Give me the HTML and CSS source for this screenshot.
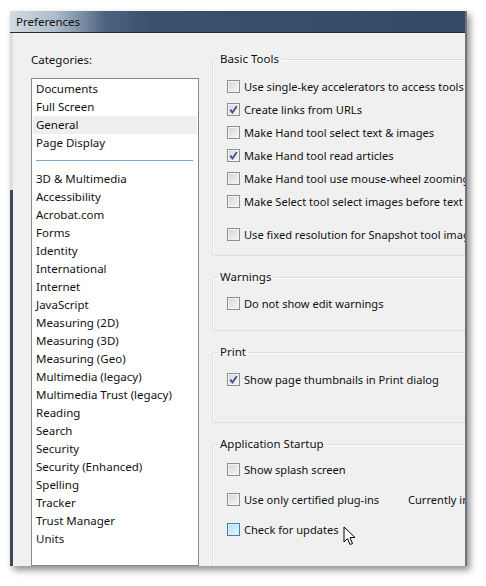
FILE: index.html
```html
<!DOCTYPE html>
<html lang="en">
<head>
    <meta charset="UTF-8">
    <title>Preferences</title>
    <link rel="stylesheet" href="styles.css">
</head>
<body>

<div class="window">
    <div class="titlebar">Preferences</div>

    <div class="dialog">
        <!-- Left: category list -->
        <div class="categories">
            <div class="cat-label">Categories:</div>
            <ul class="cat-list">
                <li>Documents</li>
                <li>Full Screen</li>
                <li class="selected">General</li>
                <li>Page Display</li>
                <li class="sep"></li>
                <li>3D &amp; Multimedia</li>
                <li>Accessibility</li>
                <li>Acrobat.com</li>
                <li>Forms</li>
                <li>Identity</li>
                <li>International</li>
                <li>Internet</li>
                <li>JavaScript</li>
                <li>Measuring (2D)</li>
                <li>Measuring (3D)</li>
                <li>Measuring (Geo)</li>
                <li>Multimedia (legacy)</li>
                <li>Multimedia Trust (legacy)</li>
                <li>Reading</li>
                <li>Search</li>
                <li>Security</li>
                <li>Security (Enhanced)</li>
                <li>Spelling</li>
                <li>Tracker</li>
                <li>Trust Manager</li>
                <li>Units</li>
            </ul>
        </div>

        <!-- Right: settings groups -->
        <div class="settings">
            <fieldset class="group basic">
                <legend>Basic Tools</legend>
                <div class="opt"><span class="box"></span>Use single-key accelerators to access tools</div>
                <div class="opt"><span class="box checked"><svg viewBox="0 0 13 13"><path d="M3.2 6.6 L5.4 9.4 L9.8 3.2"/></svg></span>Create links from URLs</div>
                <div class="opt"><span class="box"></span>Make Hand tool select text &amp; images</div>
                <div class="opt"><span class="box checked"><svg viewBox="0 0 13 13"><path d="M3.2 6.6 L5.4 9.4 L9.8 3.2"/></svg></span>Make Hand tool read articles</div>
                <div class="opt"><span class="box"></span>Make Hand tool use mouse-wheel zooming</div>
                <div class="opt"><span class="box"></span>Make Select tool select images before text</div>
                <div class="opt spaced"><span class="box"></span>Use fixed resolution for Snapshot tool images</div>
            </fieldset>

            <fieldset class="group warnings">
                <legend>Warnings</legend>
                <div class="opt"><span class="box"></span>Do not show edit warnings</div>
            </fieldset>

            <fieldset class="group print">
                <legend>Print</legend>
                <div class="opt"><span class="box checked"><svg viewBox="0 0 13 13"><path d="M3.2 6.6 L5.4 9.4 L9.8 3.2"/></svg></span>Show page thumbnails in Print dialog</div>
            </fieldset>

            <fieldset class="group startup">
                <legend>Application Startup</legend>
                <div class="opt tall"><span class="box"></span>Show splash screen</div>
                <div class="opt tall"><span class="box"></span><span class="opt-text">Use only certified plug-ins</span>Currently installed</div>
                <div class="opt tall"><span class="box hover"></span>Check for updates
                    <svg class="cursor" width="14" height="21" viewBox="0 0 14 21">
                        <path d="M1 1 L1 16 L4.5 12.5 L7 18.5 L9.5 17.5 L7 11.5 L12 11.5 Z"/>
                    </svg>
                </div>
            </fieldset>
        </div>
    </div>
</div>

</body>
</html>
```

FILE: styles.css
```css
* {
    margin: 0;
    padding: 0;
    box-sizing: border-box;
    font-family: 'Noto Sans', 'Open Sans', sans-serif;
}

body {
    background: #ffffff;
    width: 486px;
    height: 586px;
    overflow: hidden;
}

/* Window frame */
.window {
    margin: 11px 0 0 10px;
    width: 457px;
    height: 555px;
    display: flex;
    flex-direction: column;
    overflow: hidden;
    border-right: 2px solid #6f7377;
    box-shadow: 3px 4px 7px rgba(0, 0, 0, 0.45);
}

.titlebar {
    height: 22px;
    flex: none;
    padding-left: 6px;
    font-size: 11.5px;
    line-height: 21px;
    color: #111;
    background: linear-gradient(to right, #d3dbe3 0, #aebccb 45px, #4d6480 95px, #3a506b 140px, #344a64 100%);
    border-bottom: 1px solid #1f2b3a;
}

.dialog {
    flex: 1;
    display: flex;
    min-height: 0;
    background:
        linear-gradient(to bottom, #d9dee3 157px, #3d4958 157px) left top / 3px 100% no-repeat,
        #f0f0f0;
}

/* Categories */
.categories {
    flex: none;
    width: 202px;
    padding: 19px 0 0 21px;
    display: flex;
    flex-direction: column;
}

.cat-label {
    font-size: 11.5px;
    line-height: 16px;
    color: #111;
    margin-bottom: 10px;
}

.cat-list {
    list-style: none;
    flex: 1;
    width: 168px;
    background: #ffffff;
    border: 1px solid #828790;
    padding: 1px 1px 0;
}

.cat-list li {
    font-size: 11.5px;
    line-height: 18px;
    height: 18px;
    padding-left: 3px;
    color: #111;
    white-space: nowrap;
}

.cat-list li.selected {
    background: #efefef;
}

.cat-list li.sep {
    padding: 8px 4px 0 3px;
}

.cat-list li.sep::after {
    content: "";
    display: block;
    border-top: 1px solid #7ba6c9;
}

/* Settings groups */
.settings {
    flex: none;
    width: 300px;
    padding-top: 18px;
}

.group {
    width: 290px;
    border: 1px solid #d5dfe5;
    border-radius: 3px;
    box-shadow: inset 1px 1px 0 #ffffff;
    padding-left: 14px;
    margin-bottom: 13px;
}

.group legend {
    font-size: 11.5px;
    line-height: 16px;
    color: #111;
    margin-left: -9px;
    padding: 0 2px;
}

.basic { padding-top: 8px; padding-bottom: 9px; }
.warnings { padding-top: 7px; padding-bottom: 15px; }
.print { padding-top: 8px; padding-bottom: 31px; }
.startup { padding-top: 2px; padding-bottom: 40px; }

.opt {
    display: flex;
    align-items: center;
    height: 23px;
    font-size: 11.1px;
    color: #111;
    white-space: nowrap;
    position: relative;
}

.opt.spaced {
    margin-top: 10px;
}

.opt.tall {
    height: 30px;
}

.opt-text {
    width: 164px;
}

/* Checkbox */
.box {
    flex: none;
    width: 13px;
    height: 13px;
    margin-right: 4px;
    border: 1px solid #8f8f8f;
    background: linear-gradient(135deg, #d6d6d6, #f6f6f6);
    box-shadow: inset 0 0 0 1px #f4f4f4;
    position: relative;
}

.box svg {
    position: absolute;
    left: -1px;
    top: -1px;
    width: 13px;
    height: 13px;
}

.box svg path {
    fill: none;
    stroke: #3c4f8a;
    stroke-width: 1.8;
}

.box.hover {
    border-color: #3c7fb1;
    background: linear-gradient(135deg, #b1dcf4, #e6f5fd);
    box-shadow: inset 0 0 0 1px #def1fb;
}

/* Mouse pointer */
.cursor {
    position: absolute;
    left: 116px;
    top: 12px;
}

.cursor path {
    fill: #ffffff;
    stroke: #000000;
    stroke-width: 1;
}
```
